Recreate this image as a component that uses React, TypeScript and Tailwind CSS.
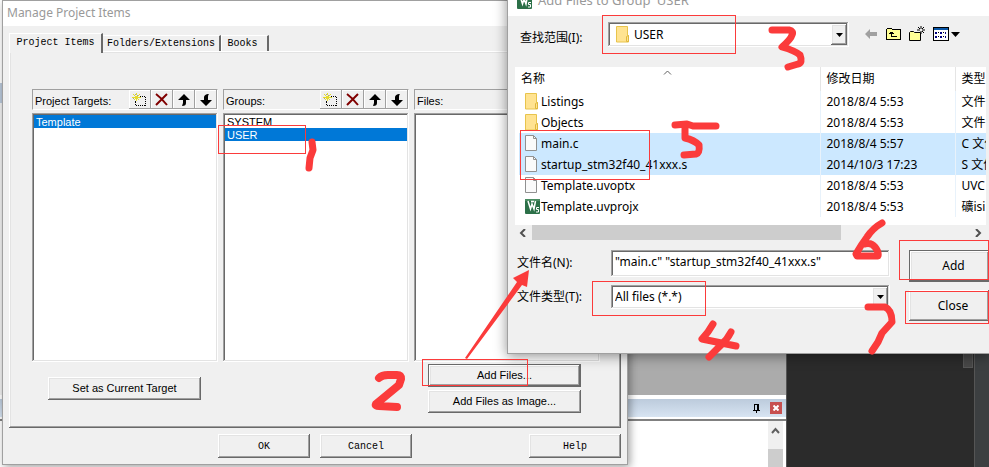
import React from "react";

const raised =
  "bg-[#f0f0f0] shadow-[inset_-1px_-1px_#696969,inset_1px_1px_#fff,inset_-2px_-2px_#a0a0a0,inset_2px_2px_#e3e3e3]";
const sunken =
  "bg-white shadow-[inset_-1px_-1px_#fff,inset_1px_1px_#a0a0a0,inset_-2px_-2px_#e3e3e3,inset_2px_2px_#696969]";
const sans = "font-['Liberation_Sans',sans-serif]";
const mono = "font-['Liberation_Mono',monospace]";
const ui = "font-['Noto_Sans','Noto_Sans_CJK_SC',sans-serif]";

function NewIcon() {
  return (
    <svg width="16" height="16" viewBox="0 0 16 16" shapeRendering="crispEdges" aria-hidden="true">
      <rect x="3.5" y="4.5" width="10" height="9" fill="none" stroke="#000" strokeDasharray="1 1" />
      <path d="M0 1h9v8H0z" fill="#f0f0f0" />
      <path d="M8 4h1v1H8zM3 9h1v1H3z" fill="#000" />
      <path d="M4 1h1v2H4zM1 2h1v1H1zM7 2h1v1H7zM2 3h1v1H2zM6 3h1v1H6zM0 5h3v1H0zM3 4h3v3H3zM6 5h3v1H6zM2 7h1v1H2zM6 7h1v1H6zM4 7h1v2H4z" fill="#e6dc28" />
      <path d="M3 2h1v1H3zM5 3h1v1H5zM1 6h1v1H1z" fill="#a0a0a0" />
    </svg>
  );
}

function DeleteIcon() {
  return (
    <svg width="16" height="16" viewBox="0 0 16 16" aria-hidden="true">
      <path d="M2 2c4 3 7 6 11 11M13 2C9 6 6 9 2 13" fill="none" stroke="#800000" strokeWidth="2" />
    </svg>
  );
}

function UpIcon() {
  return (
    <svg width="16" height="16" viewBox="0 0 16 16" aria-hidden="true">
      <path d="M8 2l6 6h-4v3c0 2-1 3-4 3l1-3V8H2z" fill="#000" />
    </svg>
  );
}

function DownIcon() {
  return (
    <svg width="16" height="16" viewBox="0 0 16 16" aria-hidden="true">
      <path d="M8 14l6-6h-4V6c0-2 0-3 1-4-3 0-5 1-5 4v2H2z" fill="#000" />
    </svg>
  );
}

const tools = [
  { name: "New", icon: <NewIcon /> },
  { name: "Delete", icon: <DeleteIcon /> },
  { name: "Move up", icon: <UpIcon /> },
  { name: "Move down", icon: <DownIcon /> },
];

function ItemColumn({
  title,
  items,
  selected,
  hasTools = true,
}: {
  title: string;
  items: string[];
  selected?: string;
  hasTools?: boolean;
}) {
  return (
    <section className="flex flex-col gap-[3px]">
      <header className="flex h-[21px] items-center border border-r-white border-b-white border-t-[#a0a0a0] border-l-[#a0a0a0] pl-0.5">
        <h2 className="pt-0.5 text-[11px] leading-4">{title}</h2>
        {hasTools && (
          <div className="ml-auto flex">
            {tools.map((t) => (
              <button
                key={t.name}
                type="button"
                aria-label={t.name}
                className="flex h-[19px] w-[22px] items-center justify-center bg-[#f0f0f0] shadow-[inset_-1px_-1px_#a0a0a0,inset_1px_1px_#fff]"
              >
                {t.icon}
              </button>
            ))}
          </div>
        )}
      </header>
      <ul role="listbox" aria-label={title} className={`h-[249px] p-0.5 text-[11px] ${sunken}`}>
        {items.map((item) => (
          <li
            key={item}
            role="option"
            aria-selected={item === selected}
            className={`h-[13px] pl-0.5 leading-[14px] ${
              item === selected ? "bg-[#0078d7] text-white" : "text-black"
            }`}
          >
            {item}
          </li>
        ))}
      </ul>
    </section>
  );
}

function ProjectItemsDialog() {
  return (
    <div
      role="dialog"
      aria-label="Manage Project Items"
      className={`absolute top-0 left-[2px] w-[626px] border border-[#a0a0a0] bg-[#f0f0f0] text-black shadow-[2px_2px_8px_#00000060] ${sans}`}
    >
      <h1 className={`h-[25px] bg-white pl-1 text-[12px] leading-[24px] text-[#999] ${ui}`}>
        Manage Project Items
      </h1>
      <div className="px-[6px] pt-[6px] pb-[6px]">
        <div role="tablist" className={`flex h-[19px] items-end text-[10px] ${mono}`}>
          <button type="button" role="tab" aria-selected="true" className="relative z-10 -mb-0.5 h-[20px] w-[94px] border-t border-r-2 border-l border-t-white border-r-[#696969] border-l-white bg-[#f0f0f0] pb-0.5 leading-4 whitespace-nowrap">
            Project Items
          </button>
          <button type="button" role="tab" aria-selected="false" className="h-[16px] w-[118px] border-t border-r-2 border-t-white border-r-[#696969] leading-4 whitespace-nowrap">
            Folders/Extensions
          </button>
          <button type="button" role="tab" aria-selected="false" className="h-[16px] w-[48px] border-t border-r-2 border-l border-t-white border-r-[#696969] border-l-white pr-1 leading-4">
            Books
          </button>
        </div>
        <div role="tabpanel" className={`px-0.5 pt-[38px] pb-[15px] ${raised}`}>
          <div className="grid grid-cols-3 gap-[5px] pr-[19px] pl-[21px]">
            <ItemColumn title="Project Targets:" items={["Template"]} selected="Template" />
            <ItemColumn title="Groups:" items={["SYSTEM", "USER"]} selected="USER" />
            <ItemColumn title="Files:" items={[]} hasTools={false} />
          </div>
          <div className="flex items-center justify-between pt-0.5 pr-[38px] pl-[37px] text-[11px]">
            <button type="button" className={`h-[23px] w-[153px] ${raised}`}>
              Set as Current Target
            </button>
            <div className="flex flex-col gap-[3px]">
              <button type="button" className={`h-[23px] w-[153px] border border-[#696969] ${raised}`}>
                Add Files...
              </button>
              <button type="button" className={`h-[23px] w-[153px] ${raised}`}>
                Add Files as Image...
              </button>
            </div>
          </div>
        </div>
        <div className={`flex gap-[10px] pt-[6px] pl-[209px] text-[10px] ${mono}`}>
          <button type="button" className={`h-[24px] w-[92px] ${raised}`}>OK</button>
          <button type="button" className={`h-[24px] w-[92px] ${raised}`}>Cancel</button>
          <button type="button" className={`ml-auto h-[24px] w-[92px] ${raised}`}>Help</button>
        </div>
      </div>
    </div>
  );
}

function FolderIcon() {
  return (
    <svg width="14" height="17" viewBox="0 0 14 17" className="shrink-0" aria-hidden="true">
      <path d="M.5.5h11v9h1v6.500H.5z" fill="#ffe391" stroke="#e8c44c" />
      <path d="M10.500 15.500v-5l2-1v6z" fill="#ffe391" stroke="#e0b83c" />
    </svg>
  );
}

function FileIcon() {
  return (
    <svg width="14" height="17" viewBox="0 0 14 17" className="shrink-0" aria-hidden="true">
      <path d="M.5.5h8l3 3v12H.5z" fill="#fafafa" stroke="#909090" />
      <path d="M8.500.5v3h3" fill="none" stroke="#909090" />
    </svg>
  );
}

function UvisionIcon() {
  return (
    <svg width="15" height="15" viewBox="0 0 15 15" className="shrink-0" aria-hidden="true">
      <rect width="15" height="15" rx="1" fill="#2c7048" />
      <path d="M0 0h15v2H0z" fill="#4a8c62" />
      <path d="M3 2l2.500 8L7 5l2 5 1.500-8M6 2.500h3" fill="none" stroke="#fff" strokeWidth="1.500" />
      <path d="M14 8.500h-2.500v2h2v2.500H11" fill="none" stroke="#fff" />
    </svg>
  );
}

function DropArrow() {
  return (
    <svg width="7" height="4" viewBox="0 0 7 4" aria-hidden="true">
      <path d="M0 0h7L3.500 4z" fill="#000" />
    </svg>
  );
}

const files = [
  { name: "Listings", date: "2018/8/4 5:53", type: "文件", icon: <FolderIcon />, on: false },
  { name: "Objects", date: "2018/8/4 5:53", type: "文件", icon: <FolderIcon />, on: false },
  { name: "main.c", date: "2018/8/4 5:57", type: "C 文件", icon: <FileIcon />, on: true },
  { name: "startup_stm32f40_41xxx.s", date: "2014/10/3 17:23", type: "S 文件", icon: <FileIcon />, on: true },
  { name: "Template.uvoptx", date: "2018/8/4 5:53", type: "UVC", icon: <FileIcon />, on: false },
  { name: "Template.uvprojx", date: "2018/8/4 5:53", type: "礦isi", icon: <UvisionIcon />, on: false },
];

function FolderTools() {
  return (
    <div className="ml-[15px] flex items-center gap-2 pt-1">
      <button type="button" aria-label="Back">
        <svg width="14" height="14" viewBox="0 0 14 14">
          <path d="M1 7l5-5v3h7v4H6v3z" fill="#a0a0a0" />
        </svg>
      </button>
      <button type="button" aria-label="Up one level">
        <svg width="15" height="14" viewBox="0 0 15 14" shapeRendering="crispEdges">
          <path d="M.5 12.500v-10l1-1h4l1 1h8v10z" fill="#ffff96" stroke="#000" />
          <path d="M5.500 5v4.500H11M3 6.500h5M4 5.500h3" fill="none" stroke="#000" />
        </svg>
      </button>
      <button type="button" aria-label="New folder">
        <svg width="16" height="16" viewBox="0 0 16 16">
          <path d="M.5 14.500v-8l1-1h3l1 1h6v8z" fill="#ffff96" stroke="#000" />
          <path d="M12 0v3M12 5v3M8 4h3M13 4h3M9 1l2 2M15 1l-2 2M13 5l2 2" stroke="#000" />
        </svg>
      </button>
      <button type="button" aria-label="View menu" className="flex items-center gap-0.5">
        <svg width="16" height="14" viewBox="0 0 16 14" shapeRendering="crispEdges">
          <path d="M.5.5h15v13H.5z" fill="#fff" stroke="#000" />
          <path d="M1 1h14v2H1z" fill="#0a57a8" />
          <path d="M2 5h2v2H2zM7 5h2v2H7zM12 5h1v2h-1zM2 9h2v2H2zM7 9h2v2H7zM12 9h1v2h-1z" fill="#000080" />
          <path d="M5 5h1v1H5zM10 5h1v1h-1zM5 9h1v1H5zM10 9h1v1h-1z" fill="#000" />
        </svg>
        <svg width="9" height="5" viewBox="0 0 9 5">
          <path d="M0 0h9L4.500 5z" fill="#000" />
        </svg>
      </button>
    </div>
  );
}

function AddFilesDialog() {
  return (
    <div
      role="dialog"
      aria-label="Add Files to Group 'USER'"
      className={`absolute top-[-14px] right-0 left-[507px] border-b border-l border-[#a0a0a0] bg-[#f0f0f0] text-[12px] text-black shadow-[0_2px_12px_#00000070] ${ui}`}
    >
      <h1 className="flex h-[30px] items-center gap-[6px] bg-white pl-[9px] text-[13px] text-[#999]">
        <UvisionIcon />
        Add Files to Group 'USER'
      </h1>
      <div className="flex h-[51px] items-start pt-[6px]">
        <label htmlFor="look-in" className="w-[100px] shrink-0 pl-3 leading-[32px]">
          查找范围(I):
        </label>
        <div className={`flex h-[25px] w-[241px] shrink-0 items-center p-0.5 pl-2 ${sunken}`}>
          <FolderIcon />
          <select id="look-in" className="h-[20px] flex-1 appearance-none bg-transparent pl-1 leading-5 outline-none">
            <option>USER</option>
          </select>
          <span className={`flex h-[21px] w-[16px] items-center justify-center ${raised}`}>
            <DropArrow />
          </span>
        </div>
        <FolderTools />
      </div>
      <div className="mr-[3px] ml-[7px] overflow-hidden">
        <div className="h-[158px] overflow-hidden bg-white">
          <table className="w-full table-fixed border-collapse">
            <thead>
              <tr className="h-[24px] text-left">
                <th className="w-[305px] p-0 pl-[6px] font-normal">
                  <span className="flex items-start">
                    <span className="w-[142px]">名称</span>
                    <svg width="9" height="5" viewBox="0 0 9 5" aria-hidden="true">
                      <path d="M1 4.500L4.500 1 8 4.500" fill="none" stroke="#606060" />
                    </svg>
                  </span>
                </th>
                <th className="w-[135px] border-l border-[#e5e5e5] p-0 pl-[6px] font-normal">修改日期</th>
                <th className="border-l border-[#e5e5e5] p-0 pl-[6px] font-normal whitespace-nowrap">类型</th>
              </tr>
            </thead>
            <tbody>
              {files.map((f) => (
                <tr key={f.name} className="h-[21px]">
                  <td className="p-0 pl-1">
                    <span className={`flex h-[21px] items-center gap-0.5 pl-[6px] ${f.on ? "bg-[#cce8ff]" : ""}`}>
                      <span className="flex w-[14px] justify-center">{f.icon}</span>
                      {f.name}
                    </span>
                  </td>
                  <td className={`border-l border-[#e8f2fb] p-0 pl-[6px] ${f.on ? "bg-[#cce8ff]" : ""}`}>{f.date}</td>
                  <td className={`overflow-hidden border-l border-[#e8f2fb] p-0 pl-[6px] whitespace-nowrap ${f.on ? "bg-[#cce8ff]" : ""}`}>
                    {f.type}
                  </td>
                </tr>
              ))}
            </tbody>
          </table>
        </div>
        <div className="flex h-[15px] items-center justify-between pr-1 pl-1">
          <svg width="8" height="8" viewBox="0 0 8 8" aria-hidden="true">
            <path d="M6 0L2 4l4 4" fill="none" stroke="#505050" strokeWidth="2" />
          </svg>
          <div className="mr-auto ml-[5px] h-[15px] w-[309px] bg-[#cdcdcd]" />
          <svg width="8" height="8" viewBox="0 0 8 8" aria-hidden="true">
            <path d="M2 0l4 4-4 4" fill="none" stroke="#505050" strokeWidth="2" />
          </svg>
        </div>
      </div>
      <div className="flex justify-between pt-[10px] pb-8">
        <div className="flex flex-col gap-2 pl-[9px]">
          <div className="flex">
            <label htmlFor="file-name" className="w-[94px] leading-[25px]">文件名(N):</label>
            <input
              id="file-name"
              defaultValue={'"main.c" "startup_stm32f40_41xxx.s"'}
              className={`h-[27px] w-[279px] px-1 pb-1 outline-none ${sunken}`}
            />
          </div>
          <div className="flex">
            <label htmlFor="file-type" className="w-[94px] leading-[24px]">文件类型(T):</label>
            <div className={`flex h-[24px] w-[279px] items-center p-0.5 ${sunken}`}>
              <select id="file-type" className="h-[20px] flex-1 appearance-none bg-transparent pl-0.5 leading-5 outline-none">
                <option>All files (*.*)</option>
              </select>
              <span className={`flex h-[20px] w-[16px] items-center justify-center ${raised}`}>
                <DropArrow />
              </span>
            </div>
          </div>
        </div>
        <div className="flex w-[80px] flex-col gap-2">
          <button type="button" className={`h-[32px] border border-r-0 border-[#696969] pl-2 ${raised}`}>Add</button>
          <button type="button" className={`h-[31px] pl-2 ${raised}`}>Close</button>
        </div>
      </div>
    </div>
  );
}

function Workspace() {
  return (
    <div className="flex h-full">
      <div className="flex w-[786px] flex-col bg-[#f0f0f0]">
        <div className="flex-1 bg-[#ababab]">
          <div className="flex h-full w-[2px] flex-col bg-[#f0f0f0]">
            <div className="h-[83px] bg-white" />
            <div className="h-[20px] bg-[#b9c8da]" />
            <div className="flex-1" />
          </div>
        </div>
        <div className="h-1 bg-white" />
        <div className="flex h-[18px] items-center justify-end gap-[10px] bg-linear-to-b from-[#bccbdc] to-[#d7e4f2] pr-1">
          <svg width="7" height="9" viewBox="0 0 7 9" shapeRendering="crispEdges" aria-label="Pin">
            <path d="M1 0h5v6h1v1H4v2H3V7H0V6h1zM2 1v5h2V1z" fill="#000" fillRule="evenodd" />
          </svg>
          <button type="button" aria-label="Close panel" className="flex size-3 items-center justify-center bg-[#c75050]">
            <svg width="6" height="6" viewBox="0 0 6 6">
              <path d="M.5.5l5 5M5.500.5l-5 5" stroke="#fff" strokeWidth="2" />
            </svg>
          </button>
        </div>
        <div className="h-[4px] border-b-2 border-[#808080] bg-white" />
        <div className="flex h-[46px] justify-end bg-white pr-[3px]">
          <div className="flex w-[15px] flex-col items-center justify-between bg-[#f0f0f0] pt-[6px]">
            <svg width="9" height="7" viewBox="0 0 9 7" aria-hidden="true">
              <path d="M1 6l3.500-4L8 6" fill="none" stroke="#606060" strokeWidth="2" />
            </svg>
            <div className="h-[18px] w-full bg-[#cdcdcd]" />
          </div>
        </div>
      </div>
      <div className="flex flex-1 justify-end border-l border-[#555] bg-[#2b2b2b]">
        <div className="h-[368px] w-[10px] border border-[#555] bg-[#474747]" />
        <div className="ml-px w-[15px] border-l border-[#555] bg-[#3c3f41]" />
      </div>
    </div>
  );
}

const boxes = [
  [218, 125, 87, 28],
  [602, 15, 133, 38],
  [520, 130, 129, 49],
  [592, 281, 113, 34],
  [899, 240, 89, 39],
  [905, 291, 83, 32],
  [422, 359, 105, 26],
];

function Annotations() {
  return (
    <svg
      width="989"
      height="467"
      viewBox="0 0 989 467"
      className="pointer-events-none absolute top-0 left-0"
      fill="none"
      stroke="#fb3b3b"
      aria-hidden="true"
    >
      {boxes.map(([x, y, w, h]) => (
        <rect key={`${x}-${y}`} x={x + 0.5} y={y + 0.5} width={w} height={h} />
      ))}
      <path d="M465 358L517 282 513 278 529 270 527 287 522 285 467 359z" fill="#fb3b3b" stroke="none" />
      <g strokeWidth="7" strokeLinecap="round" strokeLinejoin="round">
        <path d="M312 142l1 8-3 8-1 10" />
        <path d="M379 378q3-3 9-3h9q4 0 4 4l-2 6-23 19q-1 2 3 2l18 1" strokeWidth="8" />
        <path d="M772 30l17 0q5 1 3 5-1 4-10 12 14 4 18 8 3 8-2 9l-10 3" />
        <path d="M713 324q-5 9-11 15l34 7M731 332q-4 8-11 14l-11 11" />
        <path d="M675 125l12-1 6 2h23M685 127v11q9 2 14 7 1 8-3 9l-12 1" />
        <path d="M882 223q-9 5-15 14-6 8-11 17l1 2h21q1-4-3-9-4-5-10-3" />
        <path d="M868 307h17q7 3 7 15l-10 11-4 9-6 9" />
      </g>
    </svg>
  );
}

export default function App() {
  return (
    <main className="relative h-screen min-h-[467px] w-full overflow-hidden">
      <Workspace />
      <ProjectItemsDialog />
      <AddFilesDialog />
      <Annotations />
    </main>
  );
}
